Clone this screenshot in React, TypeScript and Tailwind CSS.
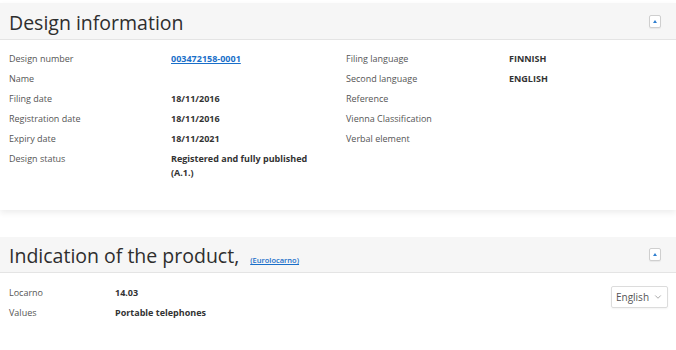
import { ChevronDown } from "lucide-react";

const left: [string, string, boolean?][] = [
  ["Design number", "003472158-0001", true],
  ["Name", ""],
  ["Filing date", "18/11/2016"],
  ["Registration date", "18/11/2016"],
  ["Expiry date", "18/11/2021"],
  ["Design status", "Registered and fully published (A.1.)"],
];

const right: [string, string][] = [
  ["Filing language", "FINNISH"],
  ["Second language", "ENGLISH"],
  ["Reference", ""],
  ["Vienna Classification", ""],
  ["Verbal element", ""],
];

function CollapseButton() {
  return (
    <button className="w-[12px] h-[13px] border border-[#cfcfcf] rounded-[2px] bg-white flex items-center justify-center shadow-[0_1px_1px_rgba(0,0,0,0.06)]">
      <span className="block w-0 h-0 border-l-[2.5px] border-r-[2.5px] border-b-[3px] border-l-transparent border-r-transparent border-b-[#2f7fd0]" />
    </button>
  );
}

function Row({ label, value, link, valueCol }: { label: string; value: string; link?: boolean; valueCol: string }) {
  return (
    <div className="flex min-h-[20px] items-start">
      <div className={`${valueCol} shrink-0 text-[#555] leading-[14px] pt-[3px]`}>{label}</div>
      <div className="flex-1 pr-4 pt-[3px] leading-[14px]">
        {link ? (
          <a href="#" className="text-[#1a6fc9] font-bold underline">{value}</a>
        ) : (
          <span className="font-bold text-[#333]">{value}</span>
        )}
      </div>
    </div>
  );
}

export default function App() {
  return (
    <div className="w-[676px] h-[350px] bg-white overflow-hidden text-[9px]" style={{ fontFamily: "'Open Sans', 'Liberation Sans', sans-serif" }}>
      <section className="mt-[3px] bg-white shadow-[0_3px_6px_rgba(0,0,0,0.07)]">
        <div className="h-[37px] bg-[#f6f6f6] border-b border-[#e4e4e4] flex items-center justify-between pl-[9px] pr-[15px]">
          <h2 className="pt-[3px] text-[19.5px] font-medium text-[#2e2e2e] leading-none">Design information</h2>
          <CollapseButton />
        </div>
        <div className="flex pt-[9px] pb-[31px] h-[170px]">
          <div className="w-[337px] pl-[9px]">
            {left.map(([l, v, link]) => (
              <Row key={l} label={l} value={v} link={link} valueCol="w-[162px]" />
            ))}
          </div>
          <div className="flex-1 pl-[9px]">
            {right.map(([l, v]) => (
              <Row key={l} label={l} value={v} valueCol="w-[163px]" />
            ))}
          </div>
        </div>
      </section>

      <section className="mt-[27px] bg-white">
        <div className="h-[36px] bg-[#f6f6f6] border-b border-[#e4e4e4] flex items-center justify-between pl-[9px] pr-[15px]">
          <h2 className="pt-[3px] text-[19.5px] font-medium text-[#2e2e2e] leading-none flex items-baseline">
            Indication of the product,
            <a href="#" className="ml-[11px] text-[7.5px] font-semibold text-[#1a6fc9] underline">(Eurolocarno)</a>
          </h2>
          <CollapseButton />
        </div>
        <div className="flex pl-[9px] pr-[8px] pt-[10px]">
          <div className="flex-1">
            <Row label="Locarno" value="14.03" valueCol="w-[106px]" />
            <Row label="Values" value="Portable telephones" valueCol="w-[106px]" />
          </div>
          <div className="mt-[3px] h-[22px] w-[57px] border border-[#dcdcdc] rounded-[2px] flex items-center justify-center gap-[4px] text-[10px] text-[#555] shadow-[0_1px_2px_rgba(0,0,0,0.05)]">
            English
            <ChevronDown size={10} strokeWidth={1.5} className="text-[#777]" />
          </div>
        </div>
      </section>
    </div>
  );
}
